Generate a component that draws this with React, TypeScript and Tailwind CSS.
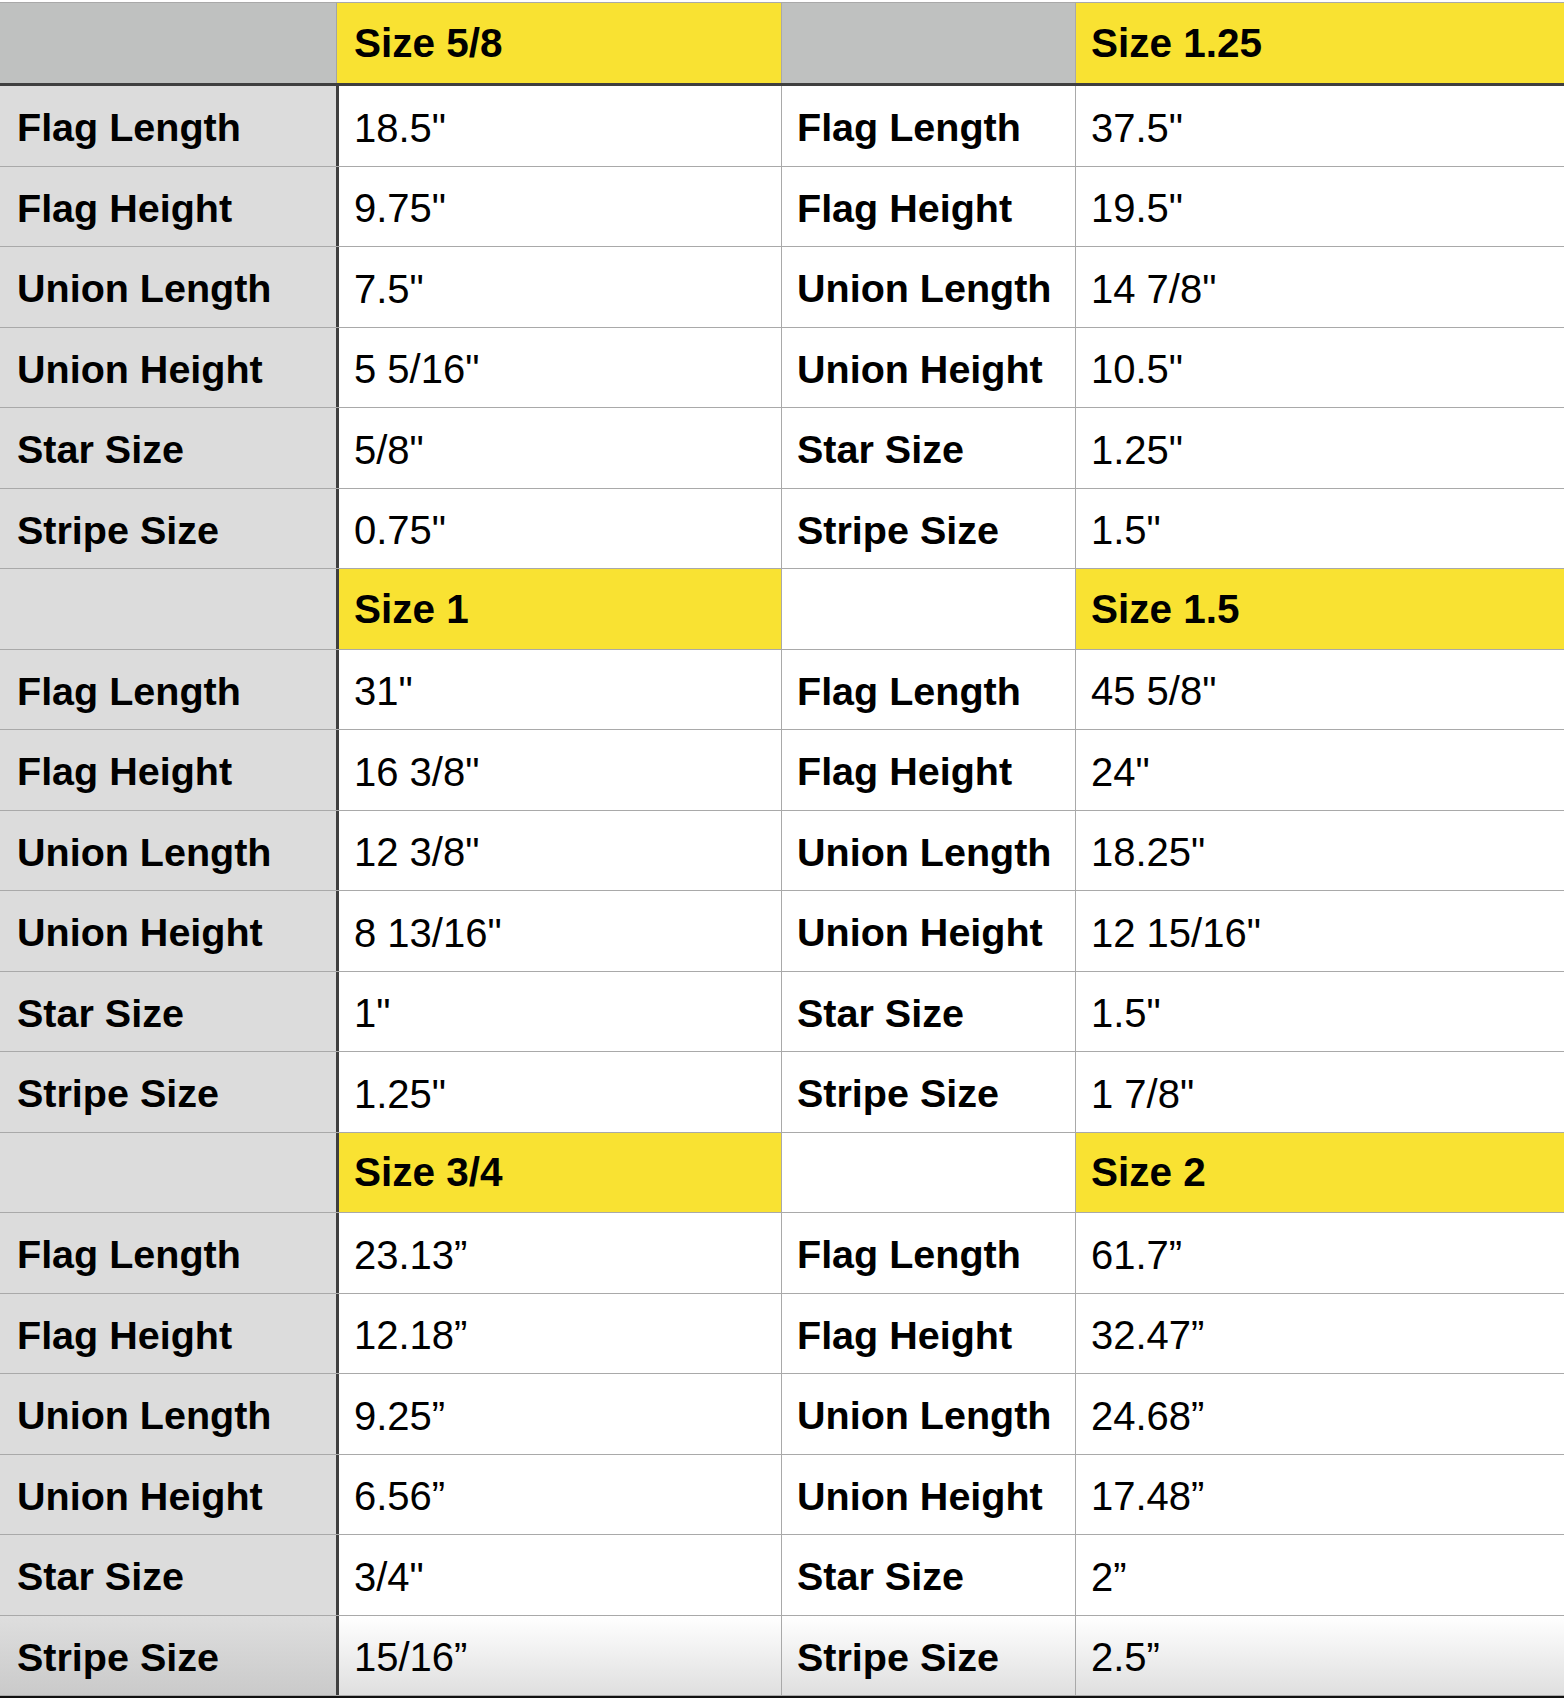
const LABELS = ["Flag Length", "Flag Height", "Union Length", "Union Height", "Star Size", "Stripe Size"];

type Section = { left: string; right: string; leftVals: string[]; rightVals: string[] };

const SECTIONS: Section[] = [
  {
    left: "Size 5/8",
    right: "Size 1.25",
    leftVals: ['18.5"', '9.75"', '7.5"', '5 5/16"', '5/8"', '0.75"'],
    rightVals: ['37.5"', '19.5"', '14 7/8"', '10.5"', '1.25"', '1.5"'],
  },
  {
    left: "Size 1",
    right: "Size 1.5",
    leftVals: ['31"', '16 3/8"', '12 3/8"', '8 13/16"', '1"', '1.25"'],
    rightVals: ['45 5/8"', '24"', '18.25"', '12 15/16"', '1.5"', '1 7/8"'],
  },
  {
    left: "Size 3/4",
    right: "Size 2",
    leftVals: ["23.13\u201d", "12.18\u201d", "9.25\u201d", "6.56\u201d", '3/4"', "15/16\u201d"],
    rightVals: ["61.7\u201d", "32.47\u201d", "24.68\u201d", "17.48\u201d", "2\u201d", "2.5\u201d"],
  },
];

const font = { fontFamily: '"Liberation Sans", Arial, Helvetica, sans-serif' };

function HeaderCells({ left, right, first }: { left: string; right: string; first: boolean }) {
  return (
    <>
      <div
        className={
          first
            ? "w-[337px] shrink-0 border-r border-[#a3a5a4] bg-[#bfc1c0]"
            : "w-[339px] shrink-0 border-r-[3px] border-[#3f3f3f] bg-[#dcdcdc]"
        }
      />
      <div
        className={
          "flex shrink-0 items-center border-r border-[#a9a9a9] bg-[#f9e232] pl-[15px] text-[40.5px] font-bold text-black " +
          (first ? "w-[445px] pl-[17px]" : "w-[443px]")
        }
      >
        {left}
      </div>
      <div className={"w-[294px] shrink-0 border-r border-[#a9a9a9] " + (first ? "bg-[#bfc1c0]" : "bg-white")} />
      <div className="flex flex-1 items-center bg-[#f9e232] pl-[15px] text-[40.5px] font-bold text-black">{right}</div>
    </>
  );
}

function DataRow({ label, a, b, last }: { label: string; a: string; b: string; last: boolean }) {
  const cell = last ? "bg-gradient-to-b from-white to-[#dfdfdf]" : "bg-white";
  return (
    <div className="flex flex-1 border-b border-[#a9a9a9]">
      <div
        className={
          "flex w-[339px] shrink-0 items-center border-r-[3px] border-[#3f3f3f] pl-[17px] pt-1 text-[39.5px] font-bold text-black " +
          (last ? "bg-gradient-to-b from-[#dedede] to-[#cacaca]" : "bg-[#dcdcdc]")
        }
      >
        {label}
      </div>
      <div className={"flex w-[443px] shrink-0 items-center border-r border-[#a9a9a9] pl-[15px] pt-1 text-[40px] text-black " + cell}>
        {a}
      </div>
      <div
        className={"flex w-[294px] shrink-0 items-center border-r border-[#a9a9a9] pl-[15px] pt-1 text-[39.5px] font-bold text-black " + cell}
      >
        {label}
      </div>
      <div className={"flex flex-1 items-center pl-[15px] pt-1 text-[40px] text-black " + cell}>{b}</div>
    </div>
  );
}

export default function App() {
  return (
    <div className="flex h-[1698px] w-[1564px] flex-col bg-white leading-none" style={font}>
      <div className="h-[3px] shrink-0 border-b border-[#a9a9a9] bg-white" />
      <div className="flex h-[80px] shrink-0">
        <HeaderCells left={SECTIONS[0].left} right={SECTIONS[0].right} first />
      </div>
      <div className="h-[3px] shrink-0 bg-[#3f3f3f]" />
      <div className="flex flex-1 flex-col">
        {SECTIONS.map((s, si) => (
          <div key={s.left} className="contents">
            {si > 0 && (
              <div className="flex flex-1 border-b border-[#a9a9a9]">
                <HeaderCells left={s.left} right={s.right} first={false} />
              </div>
            )}
            {LABELS.map((label, i) => (
              <DataRow
                key={label}
                label={label}
                a={s.leftVals[i]}
                b={s.rightVals[i]}
                last={si === SECTIONS.length - 1 && i === LABELS.length - 1}
              />
            ))}
          </div>
        ))}
      </div>
      <div className="h-[2px] shrink-0 bg-[#111111]" />
    </div>
  );
}
